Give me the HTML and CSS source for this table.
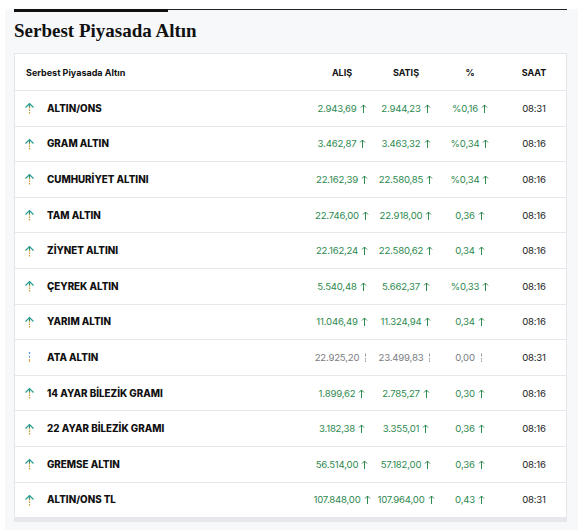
FILE: index.html
```html
<!DOCTYPE html>
<html lang="tr">
<head>
<meta charset="utf-8">
<link rel="stylesheet" href="styles.css">
</head>
<body>
<div class="page">
  <div class="topline"><span class="thick"></span><span class="thin"></span></div>
  <h1 class="title">Serbest Piyasada Altın</h1>
  <div class="card">
    <table class="tbl">
      <thead>
        <tr><th class="c-name">Serbest Piyasada Altın</th><th>ALIŞ</th><th>SATIŞ</th><th>%</th><th>SAAT</th></tr>
      </thead>
      <tbody id="rows"></tbody>
    </table>
  </div>
</div>
<script src="app.js"></script>
</body>
</html>
```

FILE: styles.css
```css
html, body { margin: 0; padding: 0; background: #fff; }
body { font-family: Inter, "Noto Sans", "Liberation Sans", sans-serif; color: #111; }
.page { margin: 9px 7px 0 5px; background: #f7f8fa; padding: 0 11px 0 9px; min-height: 521px; }
.topline { display: flex; align-items: flex-start; height: 3px; }
.topline .thick { width: 154px; height: 3px; background: #111; }
.topline .thin { flex: 1; height: 1px; background: #222; }
.title { font-family: "Liberation Serif", "DejaVu Serif", serif; font-weight: bold; font-size: 19px; letter-spacing: 0; margin: 0; padding: 8px 0 0 0; height: 33px; color: #111; }
.card { background: #fff; border: 1px solid #e4e6ea; border-bottom: 5px solid #e6e8ec; }
.tbl { width: 100%; border-collapse: collapse; table-layout: fixed; }
.tbl th { height: 36px; font-size: 9px; font-weight: 700; text-align: center; width: 64px; padding: 0; }
.tbl th.c-name { width: auto; text-align: left; padding-left: 11px; font-size: 9px; }
.tbl td { height: 34.6px; border-top: 1px solid #e6e8ec; font-size: 9.6px; text-align: center; padding: 0; white-space: nowrap; letter-spacing: -0.2px; }
.tbl td.c-name { text-align: left; padding-left: 9px; font-weight: 800; font-size: 9.8px; letter-spacing: 0; }
.name-wrap { display: flex; align-items: center; gap: 12px; }
.up { color: #2e8a4f; }
.flat { color: #7a7d82; }
.ic { display: inline-block; vertical-align: -1px; margin-left: 3px; }
.time { color: #222; }
```

FILE: app.js
```js
const data = [
  ["ALTIN/ONS","2.943,69","2.944,23","%0,16","08:31",1],
  ["GRAM ALTIN","3.462,87","3.463,32","%0,34","08:16",1],
  ["CUMHURİYET ALTINI","22.162,39","22.580,85","%0,34","08:16",1],
  ["TAM ALTIN","22.746,00","22.918,00","0,36","08:16",1],
  ["ZİYNET ALTINI","22.162,24","22.580,62","0,34","08:16",1],
  ["ÇEYREK ALTIN","5.540,48","5.662,37","%0,33","08:16",1],
  ["YARIM ALTIN","11.046,49","11.324,94","0,34","08:16",1],
  ["ATA ALTIN","22.925,20","23.499,83","0,00","08:31",0],
  ["14 AYAR BİLEZİK GRAMI","1.899,62","2.785,27","0,30","08:16",1],
  ["22 AYAR BİLEZİK GRAMI","3.182,38","3.355,01","0,36","08:16",1],
  ["GREMSE ALTIN","56.514,00","57.182,00","0,36","08:16",1],
  ["ALTIN/ONS TL","107.848,00","107.964,00","0,43","08:31",1]
];
const upSmall = '<svg class="ic" width="7" height="9" viewBox="0 0 7 9"><path d="M3.5 1V9M1 3.5L3.5 1L6 3.5" fill="none" stroke="#2e8a4f" stroke-width="1"/></svg>';
const flatSmall = '<svg class="ic" width="7" height="9" viewBox="0 0 7 9"><path d="M3.5 0.5V3.5M3.5 5V6.5M3.5 7.5V9" fill="none" stroke="#9a9da2" stroke-width="1"/></svg>';
const upBig = '<svg width="11" height="12" viewBox="0 0 11 12"><path d="M5.5 5V6.5M5.5 7.5V9M5.5 10V11.5" stroke="#c89b2c" stroke-width="1.2"/><path d="M5.5 1.5V5" stroke="#2a8f86" stroke-width="1.2"/><path d="M1.5 5.5L5.5 1.5L9.5 5.5" fill="none" stroke="#2a9d8f" stroke-width="1.2"/></svg>';
const flatBig = '<svg width="11" height="12" viewBox="0 0 11 12"><path d="M5.5 1V3" stroke="#5b8fd6" stroke-width="1.2"/><path d="M5.5 4.5V7" stroke="#7fa9e0" stroke-width="1.2"/><path d="M5.5 8V11" stroke="#e0a64a" stroke-width="1.2"/></svg>';
const tb = document.getElementById('rows');
tb.innerHTML = data.map(r => {
  const cls = r[5] ? 'up' : 'flat';
  const s = r[5] ? upSmall : flatSmall;
  return `<tr><td class="c-name"><span class="name-wrap">${r[5]?upBig:flatBig}<span>${r[0]}</span></span></td>` +
    `<td class="${cls}">${r[1]}${s}</td><td class="${cls}">${r[2]}${s}</td><td class="${cls}">${r[3]}${s}</td><td class="time">${r[4]}</td></tr>`;
}).join('');
```
